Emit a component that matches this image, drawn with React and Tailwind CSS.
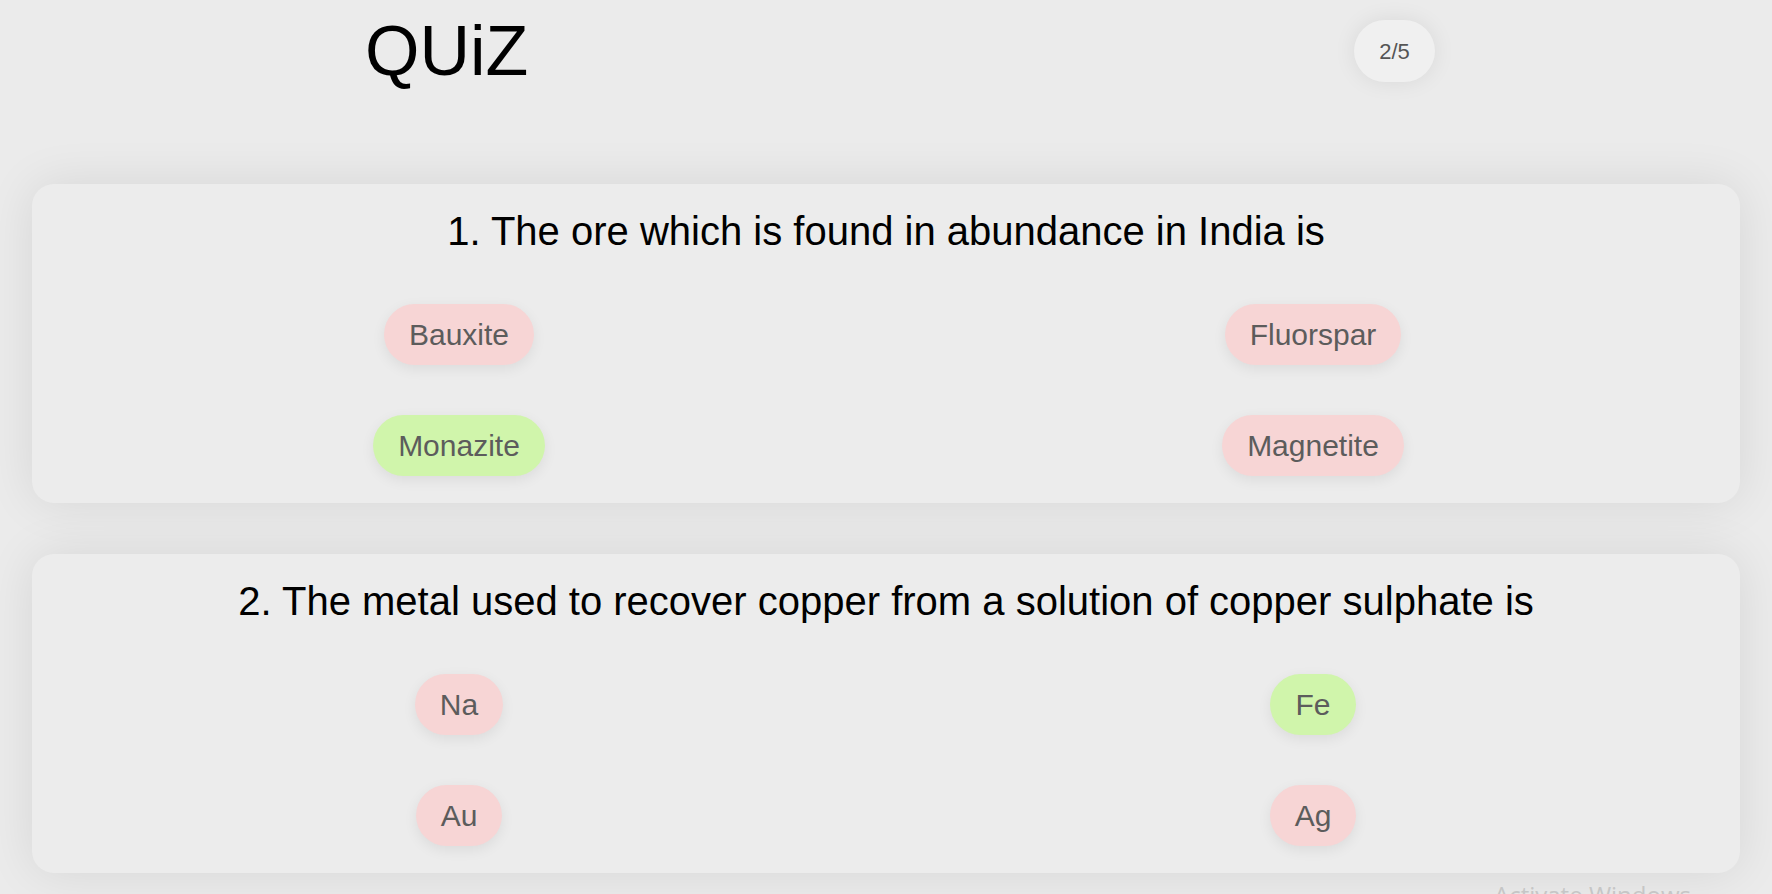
const questions = [
  {
    text: "1. The ore which is found in abundance in India is",
    options: [
      { label: "Bauxite", correct: false },
      { label: "Fluorspar", correct: false },
      { label: "Monazite", correct: true },
      { label: "Magnetite", correct: false },
    ],
  },
  {
    text: "2. The metal used to recover copper from a solution of copper sulphate is",
    options: [
      { label: "Na", correct: false },
      { label: "Fe", correct: true },
      { label: "Au", correct: false },
      { label: "Ag", correct: false },
    ],
  },
];

const Option = ({ label, correct }) => {
  return (
    <button
      className={`h-[61px] px-[25px] rounded-full text-[30px] leading-none text-[#5c5c5c] shadow-[0_4px_14px_rgba(0,0,0,0.07)] ${
        correct ? "bg-[#d0f5ab]" : "bg-[#f7d5d5]"
      }`}
    >
      {label}
    </button>
  );
};

const QuestionCard = ({ question }) => {
  return (
    <div className="mx-[32px] rounded-[22px] bg-[#ececec] shadow-[0_0_50px_rgba(0,0,0,0.09)] pt-[23px] pb-[27px] flex flex-col">
      <h2 className="text-center text-[40px] leading-[48px] text-black">{question.text}</h2>
      <div className="grid grid-cols-2 gap-y-[50px] mt-[49px]">
        {question.options.map((o) => (
          <div key={o.label} className="flex justify-center">
            <Option label={o.label} correct={o.correct} />
          </div>
        ))}
      </div>
    </div>
  );
};

export default function App() {
  return (
    <div
      className="relative h-[894px] w-full overflow-hidden bg-[#ebebeb]"
      style={{ fontFamily: '"Liberation Sans", Arial, sans-serif' }}
    >
      <header className="h-[102px] flex items-center justify-between pl-[365px] pr-[337px]">
        <h1 className="text-[70px] leading-none text-black">QUiZ</h1>
        <div className="h-[62px] w-[81px] flex items-center justify-center rounded-full bg-[#f0f0f0] text-[22px] text-[#555] shadow-[0_0_22px_rgba(0,0,0,0.08)]">
          2/5
        </div>
      </header>

      <main className="mt-[82px] flex flex-col gap-[51px]">
        {questions.map((q) => (
          <QuestionCard key={q.text} question={q} />
        ))}
      </main>

      <div
        className="absolute left-[1494px] top-[877px] text-[24px] text-[#c6c6c6]"
        style={{ fontFamily: '"Open Sans", "Noto Sans", sans-serif' }}
      >
        Activate Windows
      </div>
    </div>
  );
}
